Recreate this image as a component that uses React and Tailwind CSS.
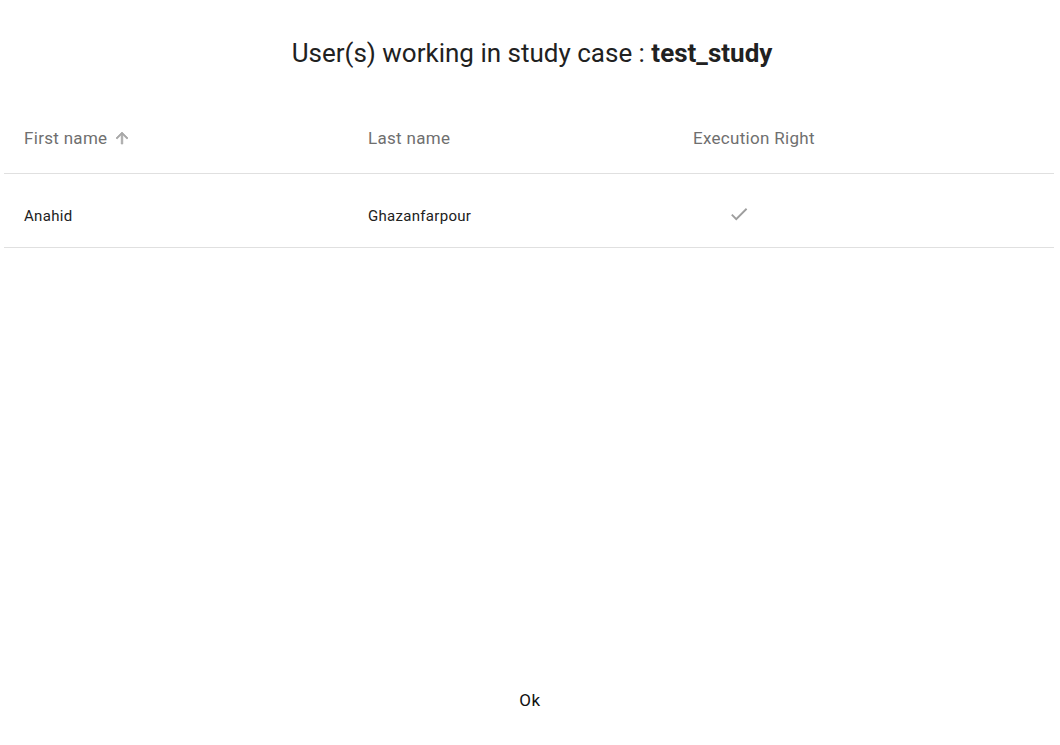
import React from "react";

export default function App() {
  return (
    <div
      className="w-[1060px] h-[745px] bg-white flex flex-col overflow-hidden"
      style={{ fontFamily: "Roboto, 'Liberation Sans', sans-serif" }}
    >
      <div className="pt-[37px] h-[69px] box-content text-center text-[26px] leading-[32px] text-[#212121]">
        <span className="inline-block translate-x-[2px]">
          User(s) working in study case : <span className="font-bold">test_study</span>
        </span>
      </div>
      <div className="ml-[4px] mr-[6px] mt-[-2px]">
        <div className="flex h-[70px] items-center border-b border-[#e0e0e0] text-[17px] font-normal tracking-[0.3px] text-[#6f6f6f]">
          <div className="w-[344px] pl-[20px] flex items-center">
            <span>First name</span>
            <svg viewBox="0 0 24 24" className="w-[18px] h-[18px] ml-[6px] mt-[-1px]" fill="#a8a8a8" stroke="#a8a8a8" strokeWidth="1">
              <path d="M4 12l1.41 1.41L11 7.83V20h2V7.83l5.58 5.59L20 12l-8-8-8 8z" />
            </svg>
          </div>
          <div className="w-[325px] pl-[20px]">Last name</div>
          <div className="flex-1 pl-[20px]">Execution Right</div>
        </div>
        <div className="flex h-[74px] items-start pt-[32px] border-b border-[#e0e0e0] text-[15px] leading-[20px] tracking-[0.3px] text-[#212121]">
          <div className="w-[344px] pl-[20px]">Anahid</div>
          <div className="w-[325px] pl-[20px]">Ghazanfarpour</div>
          <div className="flex-1 pl-[56px]">
            <svg viewBox="0 0 24 24" className="w-[22px] h-[22px] mt-[-3px] ml-[-1px]" fill="#9e9e9e">
              <path d="M9 16.17L4.83 12l-1.42 1.41L9 19 21 7l-1.41-1.41z" />
            </svg>
          </div>
        </div>
      </div>
      <div className="mt-auto flex justify-center pb-[33px]">
        <button className="text-[17px] leading-[24px] tracking-[0.5px] text-[#111] px-4 font-normal">Ok</button>
      </div>
    </div>
  );
}
